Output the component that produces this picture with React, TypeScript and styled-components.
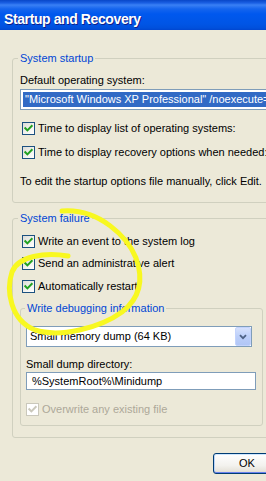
import React from "react";
import styled, { createGlobalStyle } from "styled-components";

const Global = createGlobalStyle`
  html, body { margin: 0; padding: 0; background: #ECE9D8; overflow: hidden; }
  #root { width: 266px; height: 481px; overflow: hidden; position: relative; }
`;

const Dialog = styled.div`
  width: 363px;
  height: 481px;
  display: flex;
  flex-direction: column;
  align-items: stretch;
  background: #ECE9D8;
  font-family: "Liberation Sans", Arial, sans-serif;
  font-size: 11px;
  line-height: 13px;
  color: #000;
`;

const TitleBar = styled.div`
  flex: none;
  height: 30px;
  box-sizing: border-box;
  padding: 11px 0 0 4px;
  background: linear-gradient(
    180deg,
    #0846c8 0px,
    #1a60e4 3px,
    #3a80f5 5px,
    #1464ee 9px,
    #0058ee 14px,
    #0055e5 24px,
    #0050dc 28px,
    #0046d0 30px
  );
`;

const Title = styled.span`
  display: block;
  font: bold 14px/16px "Liberation Sans", Arial, sans-serif;
  letter-spacing: -0.4px;
  color: #fff;
  text-shadow: 1px 1px 0 #0f1f89;
  white-space: nowrap;
`;

const Body = styled.div`
  flex: 1;
  display: flex;
  flex-direction: column;
  padding: 22px 8px 0 12px;
`;

const Group = styled.fieldset<{ $pb: number; $mt?: number; $ml?: number; $w?: number }>`
  margin: ${(p) => p.$mt ?? 0}px 0 0 ${(p) => p.$ml ?? 0}px;
  padding: 0 0 ${(p) => p.$pb}px 0;
  border: 1px solid #d0d0bf;
  border-radius: 3px;
  min-width: 0;
  ${(p) => (p.$w ? `width: ${p.$w}px; box-sizing: border-box;` : "")}
  display: flex;
  flex-direction: column;
  align-items: flex-start;
`;

const Legend = styled.legend<{ $ml: number }>`
  margin-left: ${(p) => p.$ml}px;
  padding: 0 2px;
  color: #0046d5;
  line-height: 13px;
  white-space: nowrap;
`;

const Label = styled.div<{ $mt: number; $ml: number }>`
  margin: ${(p) => p.$mt}px 0 0 ${(p) => p.$ml}px;
  white-space: nowrap;
`;

const Row = styled.div<{ $mt: number; $ml: number; $disabled?: boolean }>`
  margin: ${(p) => p.$mt}px 0 0 ${(p) => p.$ml}px;
  display: flex;
  align-items: center;
  gap: 3px;
  white-space: nowrap;
  color: ${(p) => (p.$disabled ? "#aca899" : "#000")};
`;

const Box = styled.span<{ $disabled?: boolean }>`
  flex: none;
  width: 13px;
  height: 13px;
  box-sizing: border-box;
  border: 1px solid ${(p) => (p.$disabled ? "#cac8bb" : "#1c5180")};
  background: ${(p) =>
    p.$disabled ? "#fff" : "linear-gradient(135deg, #dcdcd7 0%, #f4f4f0 60%, #ffffff 100%)"};
  display: flex;
  align-items: center;
  justify-content: center;
`;

const Combo = styled.div<{ $w: number; $mt: number; $ml: number }>`
  margin: ${(p) => p.$mt}px 0 0 ${(p) => p.$ml}px;
  width: ${(p) => p.$w}px;
  height: 21px;
  box-sizing: border-box;
  border: 1px solid #7f9db9;
  background: #fff;
  display: flex;
  align-items: stretch;
  white-space: nowrap;
  overflow: hidden;
`;

const Selected = styled.span`
  margin: 2px;
  flex: 1;
  background: #316ac5;
  color: #fff;
  line-height: 15px;
  padding: 0 2px;
  overflow: hidden;
`;

const ComboText = styled.span`
  flex: 1;
  padding-left: 3px;
  line-height: 19px;
`;

const DropButton = styled.span`
  flex: none;
  width: 16px;
  box-sizing: border-box;
  border: 1px solid #c3d3fd;
  border-radius: 2px;
  background: linear-gradient(180deg, #d6e1fd 0%, #bccff9 50%, #b1c6f6 100%);
  display: flex;
  align-items: center;
  justify-content: center;
`;

const Edit = styled.div<{ $w: number; $mt: number; $ml: number }>`
  margin: ${(p) => p.$mt}px 0 0 ${(p) => p.$ml}px;
  width: ${(p) => p.$w}px;
  height: 18px;
  box-sizing: border-box;
  border: 1px solid #7f9db9;
  background: #fff;
  padding-left: 5px;
  line-height: 16px;
  white-space: nowrap;
`;

const Footer = styled.div`
  margin-top: 15px;
  display: flex;
  justify-content: flex-end;
  gap: 6px;
`;

const Button = styled.button`
  width: 68px;
  height: 21px;
  box-sizing: border-box;
  border: 1px solid #003c74;
  border-radius: 3px;
  background: linear-gradient(180deg, #ffffff 0%, #f3f2ee 60%, #e6e3da 90%, #d6d0c5 100%);
  box-shadow: inset 0 1px 0 #cee7ff, inset 0 -1px 0 #6982ee, inset 1px 0 0 #bcd4f6, inset -1px 0 0 #89ade4;
  font: 11px/13px "Liberation Sans", Arial, sans-serif;
  color: #000;
  padding: 0;
`;

const Scribble = styled.svg`
  position: absolute;
  left: 0;
  top: 0;
  width: 266px;
  height: 481px;
  pointer-events: none;
`;

function Check({ disabled }: { disabled?: boolean }) {
  return (
    <Box $disabled={disabled}>
      <svg width="11" height="11" viewBox="0 0 11 11">
        <path
          d="M2.3 5.2 L4.4 7.4 L8.7 3"
          fill="none"
          stroke={disabled ? "#cac8bb" : "#21a121"}
          strokeWidth="2"
          strokeLinecap="square"
        />
      </svg>
    </Box>
  );
}

export default function App() {
  return (
    <>
      <Global />
      <Dialog>
        <TitleBar>
          <Title>Startup and Recovery</Title>
        </TitleBar>
        <Body>
          <Group $pb={14}>
            <Legend $ml={5}>System startup</Legend>
            <Label $mt={9} $ml={7}>Default operating system:</Label>
            <Combo $w={330} $mt={2} $ml={7}>
              <Selected>"Microsoft Windows XP Professional" /noexecute=optin /fastdetect</Selected>
            </Combo>
            <Row $mt={12} $ml={9}>
              <Check />
              <span>Time to display list of operating systems:</span>
            </Row>
            <Row $mt={11} $ml={9}>
              <Check />
              <span>Time to display recovery options when needed:</span>
            </Row>
            <Label $mt={16} $ml={7}>To edit the startup options file manually, click Edit.</Label>
          </Group>
          <Group $pb={11} $mt={9}>
            <Legend $ml={5}>System failure</Legend>
            <Row $mt={10} $ml={9}>
              <Check />
              <span>Write an event to the system log</span>
            </Row>
            <Row $mt={9} $ml={9}>
              <Check />
              <span>Send an administrative alert</span>
            </Row>
            <Row $mt={10} $ml={9}>
              <Check />
              <span>Automatically restart</span>
            </Row>
            <Group $pb={9} $mt={9} $ml={7} $w={243}>
              <Legend $ml={4}>Write debugging information</Legend>
              <Combo $w={226} $mt={11} $ml={5}>
                <ComboText>Small memory dump (64 KB)</ComboText>
                <DropButton>
                  <svg width="8" height="6" viewBox="0 0 8 6">
                    <path d="M1 1.2 L4 4.2 L7 1.2" fill="none" stroke="#4d6185" strokeWidth="1.8" />
                  </svg>
                </DropButton>
              </Combo>
              <Label $mt={11} $ml={5}>Small dump directory:</Label>
              <Edit $w={230} $mt={1} $ml={5}>%SystemRoot%\Minidump</Edit>
              <Row $mt={13} $ml={5} $disabled>
                <Check disabled />
                <span>Overwrite any existing file</span>
              </Row>
            </Group>
          </Group>
          <Footer>
            <Button>OK</Button>
            <Button>Cancel</Button>
          </Footer>
        </Body>
      </Dialog>
      <Scribble viewBox="0 0 266 481">
        <path
          d="M62 211 C100 208 128 238 136 258 C144 280 140 298 122 312 C100 328 60 338 35 330 C10 320 6 290 12 272 C18 256 45 252 68 256"
          fill="none"
          stroke="#f8f820"
          strokeWidth="5"
          strokeLinecap="round"
          strokeLinejoin="round"
        />
      </Scribble>
    </>
  );
}
